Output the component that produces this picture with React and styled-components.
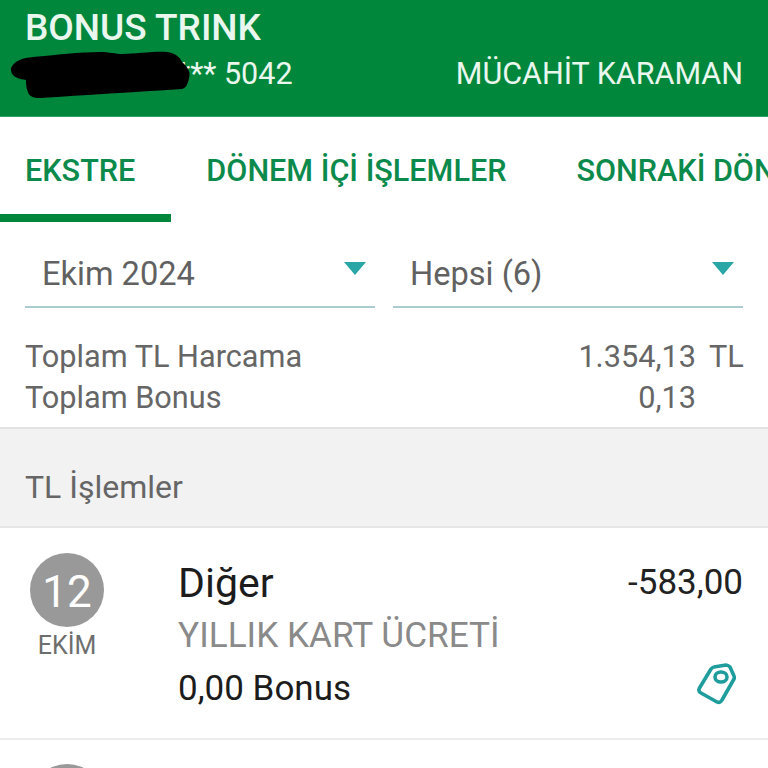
import styled, { createGlobalStyle } from 'styled-components';

const GlobalStyle = createGlobalStyle`
    html, body {
        margin: 0;
        padding: 0;
        background: #fff;
    }
    * {
        box-sizing: border-box;
    }
`

const Page = styled.div`
    width: 768px;
    height: 768px;
    overflow: hidden;
    font-family: Roboto, "Liberation Sans", sans-serif;
    background: #fff;
`

const Header = styled.header`
    height: 117px;
    background: #00873c;
    color: #e9f7ee;
    padding: 6px 25px 0;
    border-bottom: 1px solid #2fa363;
`
const CardTitle = styled.div`
    font-size: 37px;
    line-height: 44px;
    font-weight: 500;
`
const CardRow = styled.div`
    position: relative;
    display: flex;
    justify-content: space-between;
    padding-top: 2px;
    font-size: 30.5px;
    line-height: 44px;
`
const CardNumber = styled.span`
    padding-left: 152px;
`
const Scribble = styled.svg`
    position: absolute;
    left: -20px;
    top: -1px;
`

const Tabs = styled.nav`
    height: 105px;
    display: flex;
    overflow: hidden;
`
const Tab = styled.div`
    flex: none;
    padding: 34px 35px 0;
    padding-left: ${props => props.$first ? '25px' : '35px'};
    padding-right: ${props => props.$first ? '36px' : '35px'};
    font-size: 30.6px;
    line-height: 40px;
    font-weight: 500;
    color: #0b8a4c;
    white-space: nowrap;
    border-bottom: 8px solid ${props => props.$active ? '#00873c' : 'transparent'};
`

const Filters = styled.div`
    height: 86px;
    padding: 0 25px;
    display: flex;
    gap: 18px;
`
const Select = styled.div`
    flex: 1;
    position: relative;
    border-bottom: 2px solid #a9ccd0;
    padding: 32px 0 0 17px;
    font-size: 32.6px;
    line-height: 40px;
    color: #616161;
`
const Arrow = styled.span`
    position: absolute;
    right: 9px;
    top: 40px;
    width: 0;
    height: 0;
    border-left: 11px solid transparent;
    border-right: 11px solid transparent;
    border-top: 13px solid #2aa6a6;
`

const Summary = styled.section`
    height: 119px;
    padding: 28px 25px 0;
`
const SummaryRow = styled.div`
    display: flex;
    justify-content: space-between;
    font-size: 30.7px;
    line-height: 41px;
    color: #666;
`
const SummaryValue = styled.span`
    display: flex;
    gap: 13px;
`
const Currency = styled.span`
    width: 34px;
    text-align: right;
`

const SectionBand = styled.div`
    height: 101px;
    background: #f2f2f2;
    border-top: 2px solid #e3e3e3;
    border-bottom: 2px solid #e6e6e6;
    padding: 37px 25px 0;
    font-size: 32px;
    line-height: 42px;
    color: #666;
`

const Transaction = styled.article`
    height: 212px;
    display: flex;
    position: relative;
    border-bottom: 2px solid #ececec;
    padding: 25px 25px 0 30px;
`
const DateCol = styled.div`
    width: 74px;
    margin-right: 75px;
    display: flex;
    flex-direction: column;
    align-items: center;
`
const DayBadge = styled.div`
    width: 74px;
    height: 74px;
    flex: none;
    border-radius: 50%;
    background: #999;
    color: #fff;
    font-size: 44px;
    line-height: 78px;
    text-align: center;
`
const Month = styled.div`
    margin-top: 3px;
    font-size: 25px;
    line-height: 32px;
    color: #6e6e6e;
`
const Info = styled.div`
    flex: 1;
    margin-left: -1px;
`
const Category = styled.div`
    font-size: 41px;
    line-height: 60px;
    color: #1c1c1c;
`
const Description = styled.div`
    font-size: 35.2px;
    line-height: 44px;
    color: #8a8a8a;
`
const Bonus = styled.div`
    margin-top: 10px;
    font-size: 35px;
    line-height: 44px;
    color: #1c1c1c;
`
const Side = styled.div`
    display: flex;
    flex-direction: column;
    align-items: flex-end;
`
const Amount = styled.div`
    font-size: 35px;
    line-height: 60px;
    color: #222;
`
const TagIcon = styled.svg`
    margin-top: 49px;
    margin-right: 7px;
`

const NextBadge = styled(DayBadge)`
    margin: 24px 0 0 30px;
`

const App = () => {
    return (
        <Page>
            <GlobalStyle />
            <Header>
                <CardTitle>BONUS TRINK</CardTitle>
                <CardRow>
                    <CardNumber>*** 5042</CardNumber>
                    <span>MÜCAHİT KARAMAN</span>
                    <Scribble width="190" height="54" viewBox="0 0 190 54">
                        <path d="M6 19 C10 11 18 9 28 8 C50 6 75 3 95 3 C105 3 110 5 118 5 C130 5 150 2 162 3 C170 4 175 8 177 13 C183 18 186 24 184 29 C183 35 181 39 177 40 C130 43 80 46 35 49 C28 49 24 47 23 43 C21 39 21 35 21 31 C14 30 5 28 6 19 Z" fill="#000" />
                    </Scribble>
                </CardRow>
            </Header>
            <Tabs>
                <Tab $first $active>EKSTRE</Tab>
                <Tab>DÖNEM İÇİ İŞLEMLER</Tab>
                <Tab>SONRAKİ DÖNEM</Tab>
            </Tabs>
            <Filters>
                <Select>Ekim 2024<Arrow /></Select>
                <Select>Hepsi (6)<Arrow /></Select>
            </Filters>
            <Summary>
                <SummaryRow>
                    <span>Toplam TL Harcama</span>
                    <SummaryValue>1.354,13<Currency>TL</Currency></SummaryValue>
                </SummaryRow>
                <SummaryRow>
                    <span>Toplam Bonus</span>
                    <SummaryValue>0,13<Currency /></SummaryValue>
                </SummaryRow>
            </Summary>
            <SectionBand>TL İşlemler</SectionBand>
            <Transaction>
                <DateCol>
                    <DayBadge>12</DayBadge>
                    <Month>EKİM</Month>
                </DateCol>
                <Info>
                    <Category>Diğer</Category>
                    <Description>YILLIK KART ÜCRETİ</Description>
                    <Bonus>0,00 Bonus</Bonus>
                </Info>
                <Side>
                    <Amount>-583,00</Amount>
                    <TagIcon width="40" height="44" viewBox="0 0 40 44" fill="none" stroke="#1f9d9d" strokeWidth="3.6" strokeLinejoin="round">
                        <path d="M18 5 L30 3 C32 3 33 4 34 5 L38 14 C38.500 15 38.500 16 38 17 L26 38 C25 40 23 41 21 40 L5 31 C3 30 2.500 28 3.500 26 L15 7 C16 6 17 5 18 5 Z" />
                        <ellipse cx="25" cy="15" rx="6" ry="5" />
                    </TagIcon>
                </Side>
            </Transaction>
            <NextBadge />
        </Page>
    )
}

export default App
